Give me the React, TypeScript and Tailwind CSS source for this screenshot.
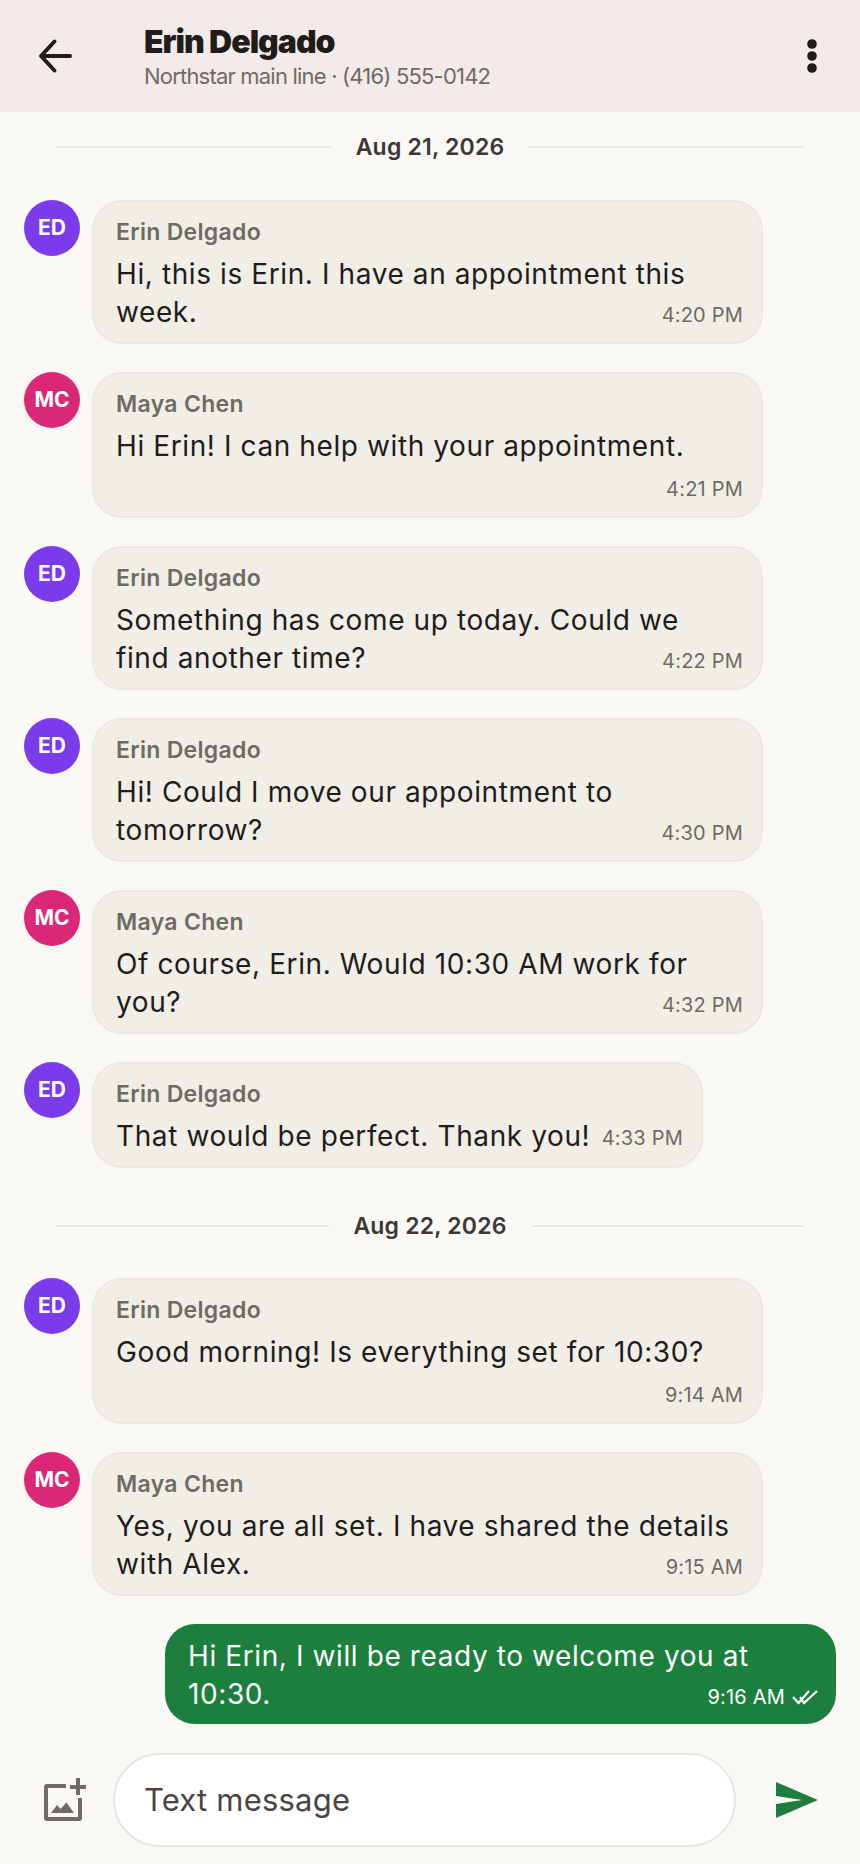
const ED = { i: "ED", c: "bg-[#7c3aed]", n: "Erin Delgado" };
const MC = { i: "MC", c: "bg-[#db2777]", n: "Maya Chen" };
function DateRow({ t, g }: { t: string; g: string }) {
  return (
    <div className="flex items-center h-[36px] mx-[56px]">
      <div className="flex-1 h-[2px] bg-[#eae8e3]" />
      <div className={`${g} text-[23px] leading-[36px] font-semibold tracking-[0.2px] text-[#3a3734]`}>{t}</div>
      <div className="flex-1 h-[2px] bg-[#eae8e3]" />
    </div>
  );
}
function Msg({ who, lines, time, narrow, h }: { who: typeof ED; lines: string[]; time: string; narrow?: boolean; h: string }) {
  return (
    <div className="flex items-start pl-[24px]">
      <div className={`${who.c} w-[56px] h-[56px] rounded-full flex items-center justify-center text-white text-[21px] font-bold shrink-0`}>{who.i}</div>
      <div className={`ml-[12px] ${narrow ? "w-[611px]" : "w-[671px]"} ${h} bg-[#f1eee8] border-2 border-[#ebe8e2] rounded-[30px] pl-[22px] pr-[17px] pt-[15px] relative`}>
        <div className="text-[23px] leading-[30px] font-semibold tracking-[0.3px] text-[#6f6a64]">{who.n}</div>
        <div className="text-[28px] leading-[38px] tracking-[0.6px] text-[#1f1c1a] mt-[8px]">
          {lines.map((l) => (<div key={l} className="whitespace-nowrap">{l}</div>))}
        </div>
        <div className={`absolute right-[18px] ${narrow ? "bottom-[14px]" : "bottom-[13px]"} text-[20px] leading-[28px] tracking-[0.2px] text-[#6f6a64]`}>{time}</div>
      </div>
    </div>
  );
}
export default function App() {
  return (
    <div className="w-[860px] h-[1864px] bg-[#faf8f5] flex flex-col overflow-hidden" style={{ fontFamily: "Inter, 'Noto Sans', sans-serif" }}>
      <header className="h-[112px] shrink-0 bg-[#f3ebe9] flex items-center pl-[38px] pr-[42px]">
        <svg width="36" height="36" viewBox="0 0 36 36" fill="none" stroke="#1f1c1a" strokeWidth="4" strokeLinecap="round" strokeLinejoin="round"><path d="M32 18H4M16.5 3.5 3 18l13.5 14.5" /></svg>
        <div className="ml-[70px] flex-1">
          <div className="text-[32px] leading-[40px] font-black text-[#1f1c1a] tracking-[-1px]">Erin Delgado</div>
          <div className="text-[22px] leading-[28px] text-[#6f6a64] tracking-[-0.8px]">Northstar main line · (416) 555-0142</div>
        </div>
        <svg width="12" height="34" viewBox="0 0 12 34" fill="#1f1c1a"><circle cx="6" cy="5" r="4.8" /><circle cx="6" cy="17" r="4.8" /><circle cx="6" cy="29" r="4.8" /></svg>
      </header>
      <main className="flex-1 flex flex-col pt-[17px]">
        <DateRow t="Aug 21, 2026" g="px-[25px]" />
        <div className="flex flex-col gap-[28px] mt-[35px]">
          <Msg who={ED} lines={["Hi, this is Erin. I have an appointment this", "week."]} time="4:20 PM" h="h-[144px]" />
          <Msg who={MC} lines={["Hi Erin! I can help with your appointment."]} time="4:21 PM" h="h-[146px]" />
          <Msg who={ED} lines={["Something has come up today. Could we", "find another time?"]} time="4:22 PM" h="h-[144px]" />
          <Msg who={ED} lines={["Hi! Could I move our appointment to", "tomorrow?"]} time="4:30 PM" h="h-[144px]" />
          <Msg who={MC} lines={["Of course, Erin. Would 10:30 AM work for", "you?"]} time="4:32 PM" h="h-[144px]" />
          <Msg who={ED} lines={["That would be perfect. Thank you!"]} time="4:33 PM" narrow h="h-[106px]" />
        </div>
        <div className="mt-[40px] mb-[34px]"><DateRow t="Aug 22, 2026" g="px-[24px]" /></div>
        <div className="flex flex-col gap-[28px]">
          <Msg who={ED} lines={["Good morning! Is everything set for 10:30?"]} time="9:14 AM" h="h-[146px]" />
          <Msg who={MC} lines={["Yes, you are all set. I have shared the details", "with Alex."]} time="9:15 AM" h="h-[144px]" />
        </div>
        <div className="mt-[28px] ml-[165px] w-[671px] h-[100px] bg-[#1c7f3e] rounded-[30px] pl-[23px] pt-[13px] relative text-white">
          <div className="text-[28px] leading-[38px] tracking-[0.6px] whitespace-nowrap">Hi Erin, I will be ready to welcome you at</div>
          <div className="text-[28px] leading-[38px] tracking-[0.6px]">10:30.</div>
          <div className="absolute right-[18px] bottom-[13px] flex items-center gap-[7px] text-[20px] leading-[28px] tracking-[0.2px]">
            9:16 AM
            <svg width="26" height="15" viewBox="0 0 26 15" fill="none" stroke="white" strokeWidth="2.2"><path d="M1 7l5.5 6L17 1M8 7l4 6L25 1" /></svg>
          </div>
        </div>
        <div className="mt-[29px] flex items-center pl-[44px]">
          <svg width="42" height="44" viewBox="0 0 42 44" fill="#6f6a64"><path d="M22 6v4H4v29h30V20h4v20a3 3 0 0 1-3 3H3a3 3 0 0 1-3-3V9a3 3 0 0 1 3-3h19z" /><path d="M32 0h4v7h6v4h-6v6h-4v-6h-6V7h6V0z" /><path d="M7 35l6-8 3.5 4 6-6.5L30 35H7z" /></svg>
          <div className="ml-[27px] w-[623px] h-[94px] bg-white border-2 border-[#e8e5e0] rounded-[47px] flex items-center pl-[29px] text-[31px] tracking-[0.2px] text-[#4a4542]">Text message</div>
          <svg className="ml-[40px]" width="42" height="36" viewBox="0 0 42 36" fill="#1c7f3e"><path d="M0 0l42 18L0 36V22l26-4L0 14z" /></svg>
        </div>
      </main>
    </div>
  );
}
